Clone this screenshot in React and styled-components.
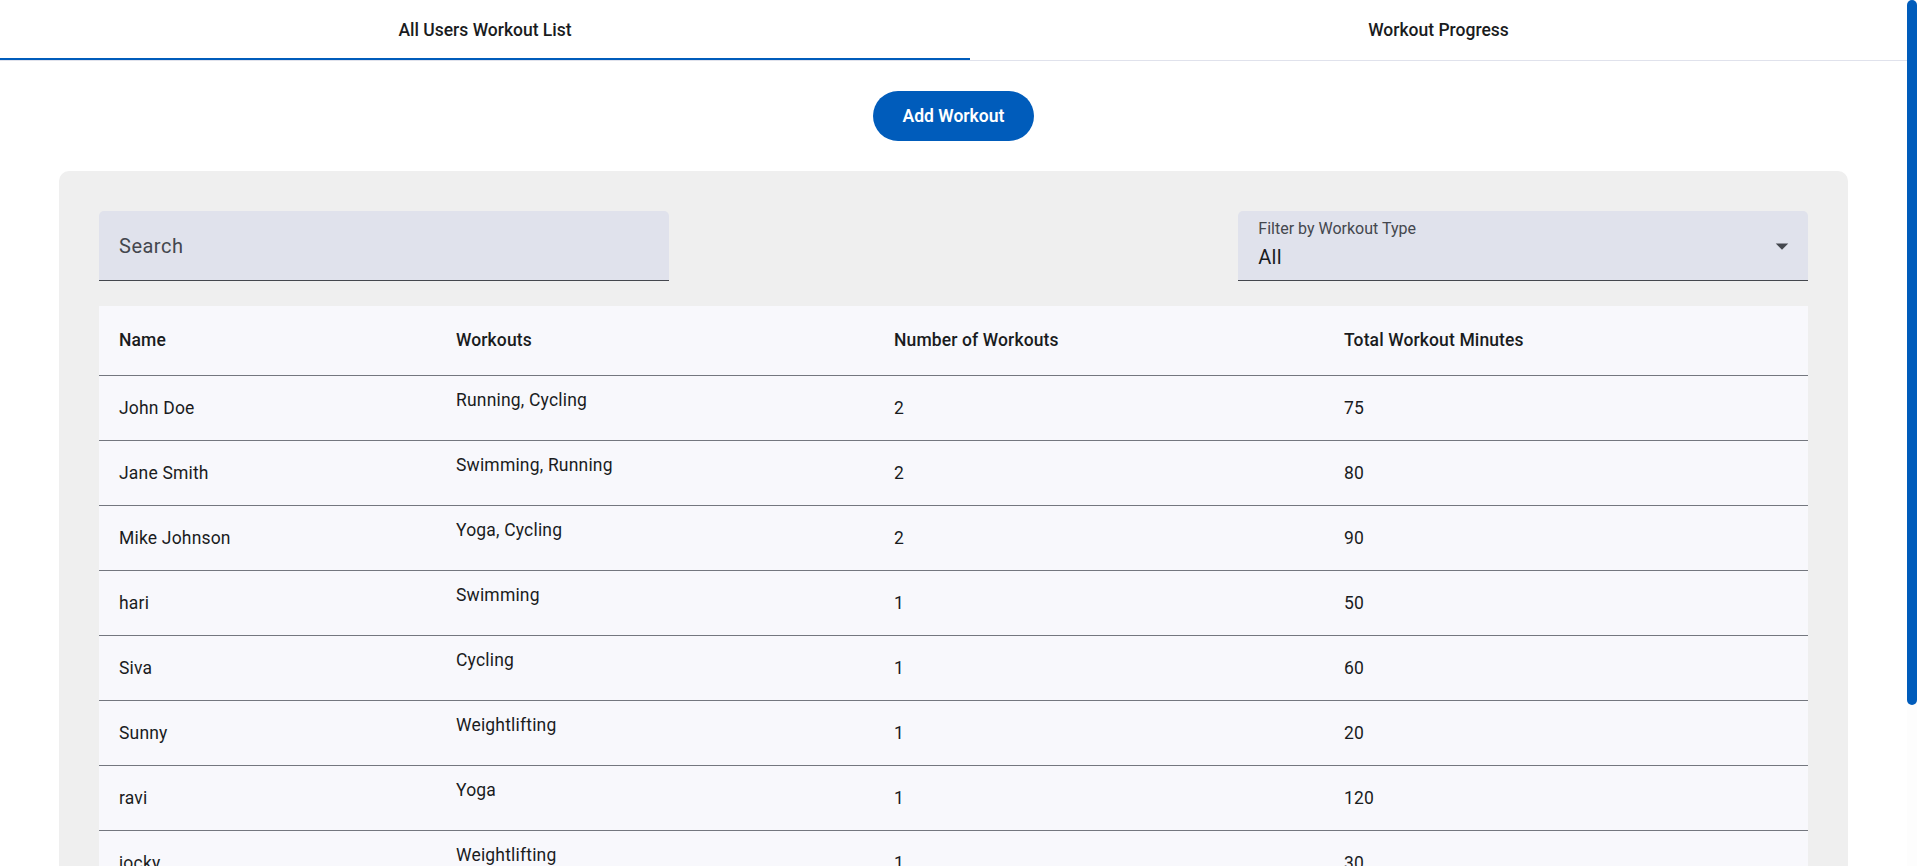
import React from 'react';
import styled, { createGlobalStyle, css } from 'styled-components';

const GlobalStyle = createGlobalStyle`
  body {
    margin: 0;
    background: #ffffff;
    color: #1a1c1e;
    font-family: Roboto, "Noto Sans", Arial, sans-serif;
  }
`;

const Shell = styled.div`
  padding-right: 10px;
`;

const ScrollTrack = styled.div`
  position: fixed;
  top: 0;
  right: 0;
  width: 10px;
  height: 100vh;
  background: #fdfdfd;
`;

const ScrollThumb = styled.div`
  height: 705px;
  border-radius: 5px;
  background: #005cbb;
`;

const TabBar = styled.nav`
  display: grid;
  grid-template-columns: 970px 1fr;
  border-bottom: 1px solid #e0e2ec;
`;

const Tab = styled.button`
  position: relative;
  height: 60px;
  padding: 0;
  border: 0;
  background: transparent;
  color: #1a1c1e;
  font-family: Roboto, Arial, sans-serif;
  font-size: 17.5px;
  font-weight: 500;
  line-height: 24px;
  cursor: pointer;
  ${(p) =>
    p.$active &&
    css`
      &::after {
        content: '';
        position: absolute;
        left: 0;
        right: 0;
        bottom: 0;
        height: 2.5px;
        background: #005cbb;
      }
    `}
`;

const Main = styled.main`
  display: flex;
  flex-direction: column;
  gap: 30px;
  padding: 30px 59px 0 59px;
`;

const AddButton = styled.button`
  align-self: center;
  height: 50px;
  padding: 0 30px;
  border: 0;
  border-radius: 25px;
  background: #005cbb;
  color: #ffffff;
  font-family: Roboto, Arial, sans-serif;
  font-size: 17.5px;
  font-weight: 600;
  line-height: 24px;
  cursor: pointer;
`;

const Panel = styled.section`
  background: #efefef;
  border-radius: 10px;
  padding: 40px;
`;

const Filters = styled.div`
  display: grid;
  grid-template-columns: 1fr 1fr 1fr;
  margin-bottom: 25px;
`;

const Field = styled.div`
  grid-column: ${(p) => p.$col};
  display: flex;
  align-items: ${(p) => (p.$top ? 'flex-start' : 'center')};
  height: 69px;
  background: #e0e2ec;
  border-bottom: 1px solid #44474e;
  border-radius: 5px 5px 0 0;
  padding: 0 11px 0 20px;
`;

const Placeholder = styled.span`
  font-size: 20px;
  line-height: 24px;
  letter-spacing: 0.5px;
  color: #44474e;
`;

const SelectBody = styled.div`
  flex: 1;
  display: flex;
  flex-direction: column;
  padding-top: 9px;
`;

const SelectLabel = styled.span`
  font-size: 16px;
  line-height: 18px;
  color: #44474e;
`;

const SelectValue = styled.span`
  margin-top: 7px;
  font-size: 20px;
  line-height: 24px;
  letter-spacing: 0.2px;
  color: #1a1c1e;
`;

const ArrowIcon = styled.svg`
  width: 30px;
  height: 30px;
  align-self: center;
  fill: #44474e;
`;

const Table = styled.table`
  width: 100%;
  border-collapse: collapse;
  table-layout: fixed;
  background: #f8f8fc;
`;

const Th = styled.th`
  padding: 20px;
  text-align: left;
  font-size: 17.5px;
  font-weight: 500;
  line-height: 29px;
  letter-spacing: 0.12px;
  color: #1a1c1e;
  border-bottom: 1px solid #74777f;
`;

const Td = styled.td`
  padding: ${(p) => (p.$raised ? '12px 20px 28px' : '20px')};
  vertical-align: ${(p) => (p.$raised ? 'top' : 'middle')};
  font-size: 17.5px;
  font-weight: 400;
  line-height: 24px;
  letter-spacing: 0.01071em;
  color: #1a1c1e;
  border-bottom: 1px solid #74777f;
`;

const rows = [
  ['John Doe', 'Running, Cycling', 2, 75],
  ['Jane Smith', 'Swimming, Running', 2, 80],
  ['Mike Johnson', 'Yoga, Cycling', 2, 90],
  ['hari', 'Swimming', 1, 50],
  ['Siva', 'Cycling', 1, 60],
  ['Sunny', 'Weightlifting', 1, 20],
  ['ravi', 'Yoga', 1, 120],
  ['jocky', 'Weightlifting', 1, 30],
  ['kiran', 'Running', 1, 40],
  ['arun', 'Cycling', 1, 45],
];

export default function App() {
  return (
    <Shell>
      <GlobalStyle />
      <TabBar>
        <Tab $active>All Users Workout List</Tab>
        <Tab>Workout Progress</Tab>
      </TabBar>
      <Main>
        <AddButton>Add Workout</AddButton>
        <Panel>
          <Filters>
            <Field $col={1}>
              <Placeholder>Search</Placeholder>
            </Field>
            <Field $col={3} $top>
              <SelectBody>
                <SelectLabel>Filter by Workout Type</SelectLabel>
                <SelectValue>All</SelectValue>
              </SelectBody>
              <ArrowIcon viewBox="0 0 24 24">
                <path d="M7 10l5 5 5-5z" />
              </ArrowIcon>
            </Field>
          </Filters>
          <Table>
            <colgroup>
              <col style={{ width: 337 }} />
              <col style={{ width: 438 }} />
              <col style={{ width: 450 }} />
              <col />
            </colgroup>
            <thead>
              <tr>
                <Th>Name</Th>
                <Th>Workouts</Th>
                <Th>Number of Workouts</Th>
                <Th>Total Workout Minutes</Th>
              </tr>
            </thead>
            <tbody>
              {rows.map(([name, workouts, count, minutes]) => (
                <tr key={name}>
                  <Td>{name}</Td>
                  <Td $raised>{workouts}</Td>
                  <Td>{count}</Td>
                  <Td>{minutes}</Td>
                </tr>
              ))}
            </tbody>
          </Table>
        </Panel>
      </Main>
      <ScrollTrack>
        <ScrollThumb />
      </ScrollTrack>
    </Shell>
  );
}
